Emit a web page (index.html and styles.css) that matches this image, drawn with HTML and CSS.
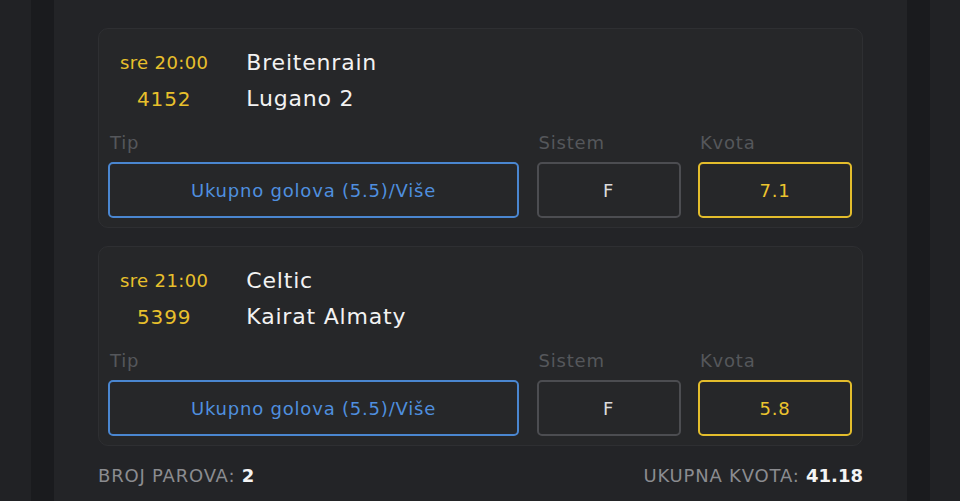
FILE: index.html
```html
<!DOCTYPE html>
<html lang="sr">
<head>
    <meta charset="UTF-8">
    <meta name="viewport" content="width=device-width, initial-scale=1.0">
    <title>Tiket</title>
    <link rel="stylesheet" href="styles.css">
</head>
<body>
    <div class="frame">
        <div class="panel">
            <div class="card">
                <div class="match">
                    <div class="when">
                        <div class="time">sre 20:00</div>
                        <div class="code">4152</div>
                    </div>
                    <div class="teams">
                        <div>Breitenrain</div>
                        <div>Lugano 2</div>
                    </div>
                </div>
                <div class="bet">
                    <div class="field">
                        <div class="label">Tip</div>
                        <div class="box box-tip">Ukupno golova (5.5)/Više</div>
                    </div>
                    <div class="field">
                        <div class="label">Sistem</div>
                        <div class="box box-sys">F</div>
                    </div>
                    <div class="field">
                        <div class="label">Kvota</div>
                        <div class="box box-odd">7.1</div>
                    </div>
                </div>
            </div>

            <div class="card">
                <div class="match">
                    <div class="when">
                        <div class="time">sre 21:00</div>
                        <div class="code">5399</div>
                    </div>
                    <div class="teams">
                        <div>Celtic</div>
                        <div>Kairat Almaty</div>
                    </div>
                </div>
                <div class="bet">
                    <div class="field">
                        <div class="label">Tip</div>
                        <div class="box box-tip">Ukupno golova (5.5)/Više</div>
                    </div>
                    <div class="field">
                        <div class="label">Sistem</div>
                        <div class="box box-sys">F</div>
                    </div>
                    <div class="field">
                        <div class="label">Kvota</div>
                        <div class="box box-odd">5.8</div>
                    </div>
                </div>
            </div>

            <div class="summary">
                <div>BROJ PAROVA: <span class="value">2</span></div>
                <div>UKUPNA KVOTA: <span class="value">41.18</span></div>
            </div>
        </div>
    </div>
</body>
</html>
```

FILE: styles.css
```css
html, body {
    height: 100%;
}
body {
    font-family: 'DejaVu Sans', sans-serif;
    letter-spacing: 0.05em;
    margin: 0;
    background-color: #212225;
    color: #f0f0f0;
    overflow: hidden;
}
.frame {
    margin: 0 30px 0 31px;
    padding: 0 23px;
    background: #1a1b1e;
    height: 100%;
}
.panel {
    background: #232427;
    height: 100%;
    padding: 28px 44px 0 44px;
    box-sizing: border-box;
}
.card {
    background: #262729;
    border: 1px solid #2e2f32;
    border-radius: 10px;
    padding: 16px 9px 9px 9px;
    margin-bottom: 18px;
}
.match {
    display: flex;
    gap: 38px;
    padding-left: 12px;
}
.when {
    text-align: center;
    color: #e8c02c;
}
.time {
    font-size: 18px;
    line-height: 36px;
    letter-spacing: 0.02em;
}
.code {
    font-size: 20px;
    line-height: 36px;
}
.teams {
    font-size: 22px;
    line-height: 36px;
    color: #f2f2f2;
}
.bet {
    display: grid;
    grid-template-columns: 411px 144px 154px;
    column-gap: 17.5px;
    margin-top: 14px;
}
.label {
    font-size: 18px;
    line-height: 24px;
    color: #55575b;
    padding-left: 2px;
    margin-bottom: 7px;
}
.box {
    height: 56px;
    box-sizing: border-box;
    border: 2px solid #4c4d51;
    border-radius: 5px;
    display: flex;
    align-items: center;
    justify-content: center;
    font-size: 18px;
}
.box-tip {
    border-color: #4a86d0;
    color: #4f8fdf;
}
.box-sys {
    color: #dcdcdc;
}
.box-odd {
    border-color: #e3bd2c;
    color: #ecc42e;
}
.summary {
    display: flex;
    justify-content: space-between;
    font-size: 18px;
    line-height: 24px;
    color: #8b8c90;
    margin-top: 1px;
}
.value {
    color: #f4f4f4;
    font-weight: 600;
    letter-spacing: 0;
}
```
